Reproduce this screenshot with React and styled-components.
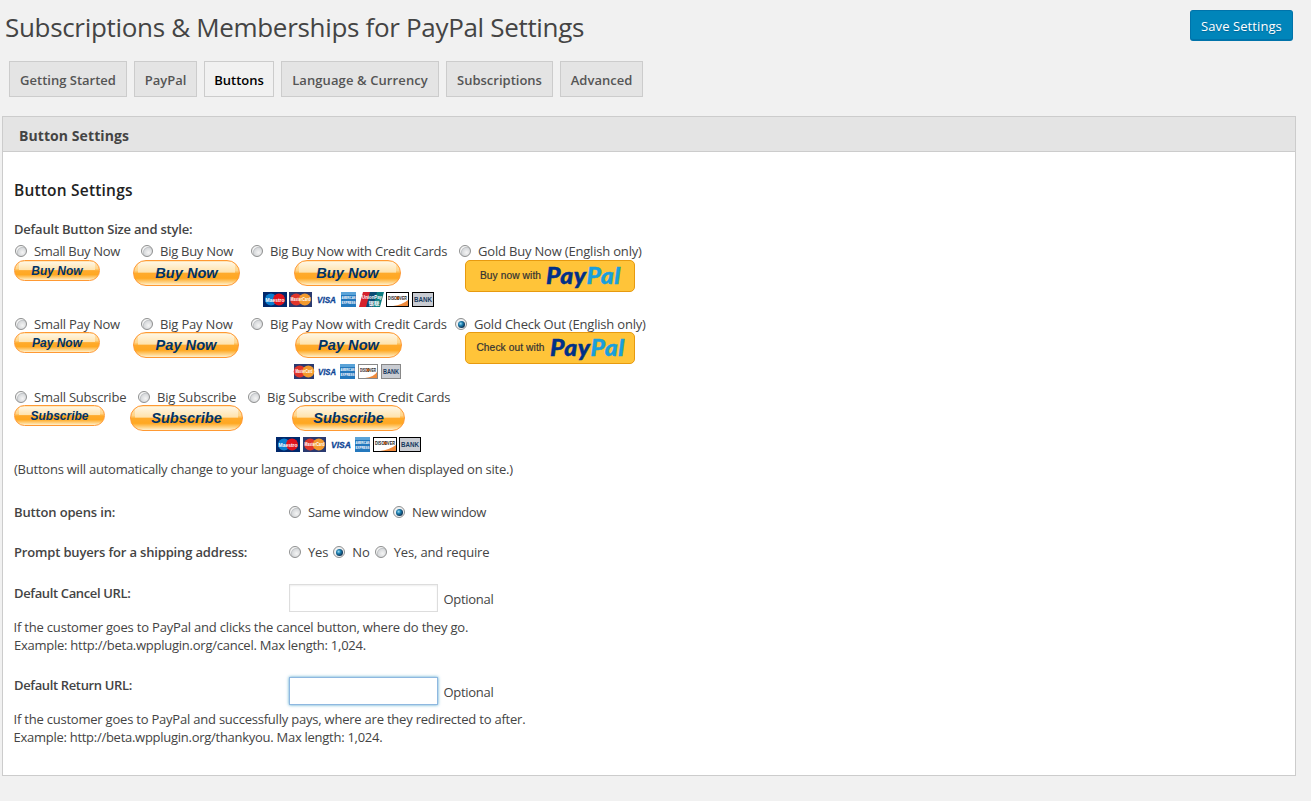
import React from "react";
import styled, { createGlobalStyle, css } from "styled-components";

const GlobalStyle = createGlobalStyle`
  * { box-sizing: border-box; }
  body {
    margin: 0;
    background: #f1f1f1;
    color: #444;
    font: 13px/18px "Open Sans", "Noto Sans", sans-serif;
  }
`;

const Page = styled.div`
  width: 1311px;
  height: 801px;
  padding: 10px 15px 0 2px;
  overflow: hidden;
`;

const TopBar = styled.header`
  display: flex;
  justify-content: space-between;
  align-items: flex-start;
  height: 51px;
  padding: 0 3px;
`;

const Text = styled.span`
  white-space: nowrap;
  letter-spacing: ${(p) => p.$ls || 0}px;
`;

const Title = styled.h1`
  margin: 0;
  font-size: 26px;
  font-weight: 400;
  line-height: 35px;
  white-space: nowrap;
`;

const SaveButton = styled.button`
  width: 103px;
  height: 31px;
  padding: 1px 0 0;
  border: 1px solid #0073aa;
  border-bottom-width: 2px;
  border-radius: 3px;
  background: #0085ba;
  color: #fff;
  font: inherit;
  text-shadow: 0 1px 1px #006799;
`;

const Tabs = styled.nav`
  display: flex;
  gap: 7px;
  padding-left: 7px;
`;

const Tab = styled.a`
  display: flex;
  justify-content: center;
  align-items: center;
  width: ${(p) => p.$w}px;
  height: 36px;
  padding-top: 2px;
  border: 1px solid #ccc;
  background: ${(p) => (p.$active ? "#f1f1f1" : "#e4e4e4")};
  color: ${(p) => (p.$active ? "#000" : "#555")};
  font-weight: 600;
`;

const Panel = styled.section`
  height: 660px;
  margin-top: 19px;
  border: 1px solid #ccc;
  background: #fff;
`;

const PanelHeader = styled.div`
  height: 35px;
  padding: 2px 16px 0;
  border-bottom: 1px solid #ccc;
  background: #e4e4e4;
  font-size: 14px;
  font-weight: 700;
  line-height: 34px;
`;

const PanelBody = styled.div`
  padding: 28px 11px 0;
`;

const Heading = styled.h2`
  margin: 0 0 20px;
  color: #222;
  font-size: 15.5px;
  font-weight: 600;
  line-height: 20px;
`;

const Strong = styled.div`
  width: ${(p) => p.$w || "auto"};
  font-weight: 600;
`;

const RadioLabel = styled.label`
  display: flex;
  align-items: center;
  height: 18px;
  margin-left: ${(p) => p.$x || 0}px;
`;

const StyleRow = styled.div`
  display: flex;
  height: ${(p) => p.$h || 73}px;
  padding-top: 4px;
  ${RadioLabel} {
    margin-bottom: ${(p) => p.$drop || 0}px;
  }
`;

const Option = styled.div`
  width: ${(p) => p.$w}px;
`;

const Radio = styled.span`
  position: relative;
  flex: none;
  width: 12px;
  height: 12px;
  margin: 0 7px 0 1px;
  border: 1px solid #8e8f8f;
  border-radius: 50%;
  background: radial-gradient(circle at 65% 65%, #f4f4f4 0, #d9dbdd 45%, #c2c5c8 56%, #f3f3f3 64%);
  ${(p) =>
    p.$on &&
    css`
      background: #eef0f2;
      &::after {
        content: "";
        position: absolute;
        inset: 1.5px;
        border-radius: 50%;
        background: radial-gradient(circle at 38% 38%, #9fdcf2 0, #1c7fb0 32%, #0b2f50 72%);
      }
    `}
`;

const Pill = styled.div`
  display: flex;
  justify-content: center;
  align-items: center;
  width: ${(p) => p.$w}px;
  height: ${(p) => (p.$big ? 26 : 21)}px;
  margin: -1px 0 0 ${(p) => p.$x || 0}px;
  border: 1px solid #ff9933;
  border-radius: 13px;
  background:
    linear-gradient(#fff6e2, #ffe2ab) 50% 1px / calc(100% - 8px) 44% no-repeat,
    linear-gradient(#ffe7bb 0, #ffd58a 40%, #ffaa2b 52%, #ffa822 72%, #ffd68c 90%, #fff0cf 100%);
  color: #003366;
  font: italic 700 ${(p) => (p.$big ? 14.6 : 12)}px/1 "Liberation Sans", sans-serif;
`;

const Gold = styled.div`
  display: flex;
  justify-content: center;
  align-items: center;
  gap: 5px;
  width: 170px;
  height: 32px;
  margin: -1px 0 0 6px;
  border: 1px solid #e79a0f;
  border-radius: 5px;
  background: #ffc439;
  color: #333;
  font: 10.2px/1 "Liberation Sans", sans-serif;
  -webkit-text-stroke: 0.2px;
`;

const Logo = styled.span`
  display: inline-block;
  width: 74px;
  color: #003087;
  font: italic 900 22px/24px Lato, sans-serif;
  letter-spacing: 0.5px;
  transform: scaleX(1.12);
  transform-origin: 0 50%;
  -webkit-text-stroke: 0.4px;
  em { color: #1a9fdc; }
`;

const Cards = styled.div`
  display: flex;
  margin: 6px 0 0 ${(p) => p.$x}px;
`;

const CardIcon = styled.svg`
  flex: none;
  display: block;
  margin-right: ${(p) => p.$gap}px;
  overflow: visible;
`;

const Note = styled.div`
  margin-left: -0.5px;
`;

const Field = styled.div`
  display: flex;
  height: ${(p) => p.$h}px;
`;

const Controls = styled.div`
  display: flex;
  align-items: center;
  height: 18px;
  gap: 4px;
`;

const Input = styled.input`
  width: 149px;
  height: 28px;
  border: 1px solid ${(p) => (p.$focus ? "#8fb8e0" : "#ddd")};
  box-shadow: ${(p) => (p.$focus ? "0 0 3px rgba(30, 140, 190, 0.8)" : "inset 0 1px 2px rgba(0, 0, 0, 0.07)")};
  background: #fff;
  outline: 0;
`;

const UrlControl = styled.div`
  display: flex;
  align-items: center;
  gap: 5.5px;
  height: 28px;
  margin-top: ${(p) => p.$y || 0}px;
  ${Text} { padding-top: 2px; }
`;

function Card({ kind, w, gap, dark }) {
  const edge = dark ? "#000" : "#888";
  const label = (text, fill, size, y, len, x = w / 2) => (
    <text x={x} y={y} textAnchor="middle" textLength={len} lengthAdjust="spacingAndGlyphs"
      fontFamily="Liberation Sans, Noto Sans CJK SC, sans-serif" fontWeight="700" fontSize={size} fill={fill}>{text}</text>
  );
  return (
    <CardIcon width={w} height="15" $gap={gap}>
      {kind === "maestro" && (<>
        <rect width={w} height="15" fill="#00286c" />
        <circle cx="8" cy="7.5" r="6" fill="#0b7fd0" />
        <circle cx={w - 8} cy="7.5" r="6" fill="#e0121c" />
        {label("Maestro", "#fff", 5.5, 9.5, w - 5)}
      </>)}
      {kind === "mc" && (<>
        <rect width={w} height="15" fill="#2a3a70" />
        <circle cx={w / 2 - 4.3} cy="7.5" r="6" fill="#e0352b" />
        <circle cx={w / 2 + 4.3} cy="7.5" r="6" fill="#f39a2d" />
        {label("MasterCard", "#fff", 5, 9.3, w - 3)}
      </>)}
      {kind === "visa" && (
        <text x="0" y="11" textLength={w - 1} lengthAdjust="spacingAndGlyphs" fontFamily="Liberation Sans"
          fontWeight="700" fontStyle="italic" fontSize="9.5" fill="#0e4595" stroke="#0e4595" strokeWidth=".3">VISA</text>
      )}
      {kind === "amex" && (<>
        <rect width={w} height="15" fill="#2478bd" />
        <path d={`M0 0h${w}v3H0z`} fill="#5aa3d8" />
        {label("AMERICAN", "#fff", 4, 7.4, w - 1)}
        {label("EXPRESS", "#fff", 4, 12, w - 1)}
      </>)}
      {kind === "union" && (<>
        <path d="M4 0h8L8 15H0z" fill="#d5222c" />
        <path d="M11 0h8l-4 15H7z" fill="#0b4a73" />
        <path d="M18 0h7l-4 15h-7z" fill="#0b7c80" />
        {label("UnionPay", "#fff", 5, 7, 20, 13)}
        {label("银联", "#fff", 4.5, 12.6, 11, 15)}
      </>)}
      {kind === "discover" && (<>
        <rect x=".5" y=".5" width={w - 1} height="14" fill="#fff" stroke={edge} />
        <path d={`M${w - 1} 8v6H7q9-1 ${w - 8}-6z`} fill="#ee8a3c" />
        <circle cx={w / 2} cy="6" r="1.8" fill="#ee7b29" />
        {label("DISCOVER", "#222", 5, 8, w - 4)}
      </>)}
      {kind === "bank" && (<>
        <rect x=".5" y=".5" width={w - 1} height="14" fill="#c9ccd2" stroke={edge} />
        {label("BANK", "#17395f", 6.5, 9.8, w - 4)}
      </>)}
    </CardIcon>
  );
}

const CardRow = ({ x, cards, dark }) => (
  <Cards $x={x}>
    {cards.map(([kind, w, gap]) => <Card key={kind} kind={kind} w={w} gap={gap} dark={dark} />)}
  </Cards>
);

const Choice = ({ x, on, ls, children }) => (
  <RadioLabel $x={x}>
    <Radio $on={on} />
    <Text $ls={ls}>{children}</Text>
  </RadioLabel>
);

const GoldButton = ({ children }) => (
  <Gold><Text $ls={0.1}>{children}</Text><Logo>Pay<em>Pal</em></Logo></Gold>
);

const tabs = [
  ["Getting Started", 118], ["PayPal", 63], ["Buttons", 70],
  ["Language & Currency", 158, 0.1], ["Subscriptions", 107], ["Advanced", 83],
];

export default function App() {
  return (
    <Page>
      <GlobalStyle />
      <TopBar>
        <Title><Text $ls={-0.32}>Subscriptions &amp; Memberships for PayPal Settings</Text></Title>
        <SaveButton><Text $ls={0.08}>Save Settings</Text></SaveButton>
      </TopBar>
      <Tabs>
        {tabs.map(([name, w, ls]) => (
          <Tab key={name} $w={w} $active={name === "Buttons"}><Text $ls={ls}>{name}</Text></Tab>
        ))}
      </Tabs>
      <Panel>
        <PanelHeader><Text $ls={0.08}>Button Settings</Text></PanelHeader>
        <PanelBody>
          <Heading><Text $ls={0.2}>Button Settings</Text></Heading>
          <Strong><Text $ls={-0.21}>Default Button Size and style:</Text></Strong>
          <StyleRow $drop={1}>
            <Option $w={116}>
              <Choice ls={-0.33}>Small Buy Now</Choice>
              <Pill $w={86}>Buy Now</Pill>
            </Option>
            <Option $w={118}>
              <Choice x={10} ls={-0.27}>Big Buy Now</Choice>
              <Pill $big $w={107} $x={3}>Buy Now</Pill>
            </Option>
            <Option $w={211}>
              <Choice x={2} ls={-0.22}>Big Buy Now with Credit Cards</Choice>
              <Pill $big $w={107} $x={46}>Buy Now</Pill>
              <CardRow dark x={15} cards={[["maestro", 24, 2], ["mc", 23, 5], ["visa", 20, 4], ["amex", 15, 3], ["union", 25, 2], ["discover", 23, 3], ["bank", 22, 0]]} />
            </Option>
            <Option $w={200}>
              <Choice x={-1} ls={-0.19}>Gold Buy Now (English only)</Choice>
              <GoldButton>Buy now with</GoldButton>
            </Option>
          </StyleRow>
          <StyleRow>
            <Option $w={116}>
              <Choice ls={-0.23}>Small Pay Now</Choice>
              <Pill $w={86}>Pay Now</Pill>
            </Option>
            <Option $w={118}>
              <Choice x={10} ls={-0.18}>Big Pay Now</Choice>
              <Pill $big $w={106} $x={3}>Pay Now</Pill>
            </Option>
            <Option $w={211}>
              <Choice x={2} ls={-0.19}>Big Pay Now with Credit Cards</Choice>
              <Pill $big $w={107} $x={47}>Pay Now</Pill>
              <CardRow x={46} cards={[["mc", 20, 4], ["visa", 19, 3], ["amex", 15, 3], ["discover", 20, 3], ["bank", 20, 0]]} />
            </Option>
            <Option $w={200}>
              <Choice on x={-5} ls={-0.2}>Gold Check Out (English only)</Choice>
              <GoldButton>Check out with</GoldButton>
            </Option>
          </StyleRow>
          <StyleRow $h={76}>
            <Option $w={116}>
              <Choice ls={-0.23}>Small Subscribe</Choice>
              <Pill $w={91}>Subscribe</Pill>
            </Option>
            <Option $w={118}>
              <Choice x={7} ls={-0.18}>Big Subscribe</Choice>
              <Pill $big $w={113}>Subscribe</Pill>
            </Option>
            <Option $w={211}>
              <Choice x={-1} ls={-0.19}>Big Subscribe with Credit Cards</Choice>
              <Pill $big $w={113} $x={44}>Subscribe</Pill>
              <CardRow dark x={28} cards={[["maestro", 24, 3], ["mc", 23, 5], ["visa", 21, 3], ["amex", 15, 3], ["discover", 24, 2], ["bank", 22, 0]]} />
            </Option>
          </StyleRow>
          <Field $h={43}><Text $ls={-0.23}>(Buttons will automatically change to your language of choice when displayed on site.)</Text></Field>
          <Field $h={40}>
            <Strong $w="274px"><Text $ls={-0.15}>Button opens in:</Text></Strong>
            <Controls>
              <Choice ls={-0.38}>Same window</Choice>
              <Choice on ls={-0.38}>New window</Choice>
            </Controls>
          </Field>
          <Field $h={41}>
            <Strong $w="274px"><Text $ls={-0.16}>Prompt buyers for a shipping address:</Text></Strong>
            <Controls>
              <Choice ls={-0.2}>Yes</Choice>
              <Choice on>No</Choice>
              <Choice ls={-0.18}>Yes, and require</Choice>
            </Controls>
          </Field>
          <Field $h={34}>
            <Strong $w="275px"><Text $ls={-0.36}>Default Cancel URL:</Text></Strong>
            <UrlControl><Input /><Text $ls={-0.3}>Optional</Text></UrlControl>
          </Field>
          <Note><Text $ls={-0.19}>If the customer goes to PayPal and clicks the cancel button, where do they go.</Text></Note>
          <Field $h={40}><Text $ls={-0.25}>Example: http://beta.wpplugin.org/cancel. Max length: 1,024.</Text></Field>
          <Field $h={34}>
            <Strong $w="275px"><Text $ls={-0.36}>Default Return URL:</Text></Strong>
            <UrlControl $y={1}><Input $focus /><Text $ls={-0.3}>Optional</Text></UrlControl>
          </Field>
          <Note><Text $ls={-0.215}>If the customer goes to PayPal and successfully pays, where are they redirected to after.</Text></Note>
          <Note><Text $ls={-0.27}>Example: http://beta.wpplugin.org/thankyou. Max length: 1,024.</Text></Note>
        </PanelBody>
      </Panel>
    </Page>
  );
}
